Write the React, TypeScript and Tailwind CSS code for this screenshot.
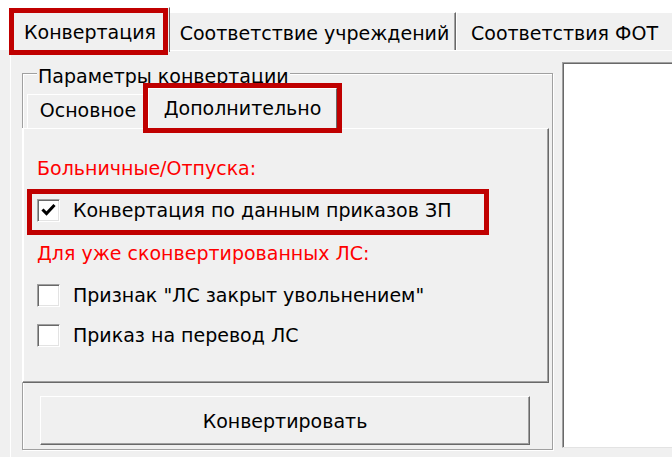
import React from "react";

function CheckBox({ checked }: { checked?: boolean }) {
  return (
    <div className="w-[23px] h-[23px] shrink-0 bg-white border-t border-l border-[#a0a0a0] border-r border-b border-r-white border-b-white shadow-[inset_1px_1px_0_#696969,inset_-1px_-1px_0_#e3e3e3] flex items-center justify-center">
      {checked && (
        <svg width="17" height="17" viewBox="0 0 17 17">
          <path d="M3.5 8.5 L6.5 11.5 L13.5 4" fill="none" stroke="#000" strokeWidth="3" strokeLinecap="square" />
        </svg>
      )}
    </div>
  );
}

export default function App() {
  return (
    <div className="w-[672px] h-[457px] overflow-hidden bg-[#f0f0f0] text-black text-[19px] leading-[24px] font-['DejaVu_Sans',sans-serif] flex flex-col">
      {/* outer tab strip */}
      <div className="h-[50px] shrink-0 bg-white flex items-end pl-[10px] relative">
        <div className="relative z-10 shrink-0 w-[160px] h-[45px] -mb-[2px] bg-[#f0f0f0] border-t border-l border-white border-r border-r-[#696969] flex justify-center pt-[12px] whitespace-nowrap">
          Конвертация
          <div className="absolute left-[-2px] top-0 w-[159px] h-[47px] border-[5px] border-[#c00000]" />
        </div>
        <div className="shrink-0 w-[286px] h-[38px] bg-[#f0f0f0] border-t border-white border-r border-r-[#696969] shadow-[inset_-1px_0_0_#a0a0a0] flex justify-center pt-[8px] pl-[4px] whitespace-nowrap">
          Соответствие учреждений
        </div>
        <div className="shrink-0 w-[226px] h-[38px] bg-[#f0f0f0] border-t border-l border-white flex justify-start pt-[8px] pl-[14px] whitespace-nowrap">
          Соответствия ФОТ
        </div>
      </div>

      {/* outer tab page */}
      <div className="flex-1 ml-[10px] border-t border-l border-white flex items-start pl-[11px]">
        {/* group box */}
        <div className="relative mt-[22px] w-[531px] h-[377px] shrink-0 border border-[#a0a0a0] shadow-[inset_1px_1px_0_#fff,1px_1px_0_#fff]">
          <div className="absolute left-[14px] top-[-10px] px-[1px] bg-[#f0f0f0] whitespace-nowrap">
            Параметры конвертации
          </div>

          {/* inner tabs */}
          <div className="relative mt-[14px] h-[40px] flex items-end pl-[4px]">
            <div className="shrink-0 w-[121px] h-[34px] bg-[#f0f0f0] border-t border-l border-white flex justify-center pt-[3px]">
              Основное
            </div>
            <div className="relative z-10 shrink-0 w-[189px] h-[42px] -mb-[2px] bg-[#f0f0f0] border-t border-l border-white border-r border-r-[#696969] flex justify-center pt-[7px]">
              Дополнительно
              <div className="absolute left-[-6px] top-[-6px] right-[-6px] bottom-[-3px] border-[5px] border-[#c00000]" />
            </div>
          </div>

          {/* inner tab page */}
          <div className="-ml-px w-[527px] h-[255px] border-t border-l border-white border-r border-b border-r-[#696969] border-b-[#696969] shadow-[inset_-1px_-1px_0_#a0a0a0] pt-[18px] pl-[14px]">
            <div className="h-[42px] flex items-center text-[#ff0000]">Больничные/Отпуска:</div>
            <div className="relative h-[42px] flex items-center">
              <CheckBox checked />
              <span className="ml-[13px] whitespace-nowrap">Конвертация по данным приказов ЗП</span>
              <div className="absolute left-[-10px] top-0 w-[462px] h-[46px] border-[5px] border-[#c00000]" />
            </div>
            <div className="h-[44px] flex items-center text-[#ff0000] whitespace-nowrap">Для уже сконвертированных ЛС:</div>
            <div className="h-[40px] flex items-center">
              <CheckBox />
              <span className="ml-[13px] whitespace-nowrap">Признак "ЛС закрыт увольнением"</span>
            </div>
            <div className="h-[40px] flex items-center">
              <CheckBox />
              <span className="ml-[13px] whitespace-nowrap">Приказ на перевод ЛС</span>
            </div>
          </div>

          {/* action button */}
          <div className="pt-[13px] pl-[17px]">
            <div className="w-[490px] h-[49px] bg-[#f0f0f0] border-t border-l border-white border-r border-b border-r-[#696969] border-b-[#696969] shadow-[inset_-1px_-1px_0_#a0a0a0] flex items-center justify-center">
              Конвертировать
            </div>
          </div>
        </div>

        {/* list */}
        <div className="mt-[11px] ml-[9px] flex-1 h-[386px] bg-white border-t border-l border-[#a0a0a0] border-b border-b-[#e3e3e3] shadow-[inset_1px_1px_0_#696969]" />
      </div>
    </div>
  );
}
